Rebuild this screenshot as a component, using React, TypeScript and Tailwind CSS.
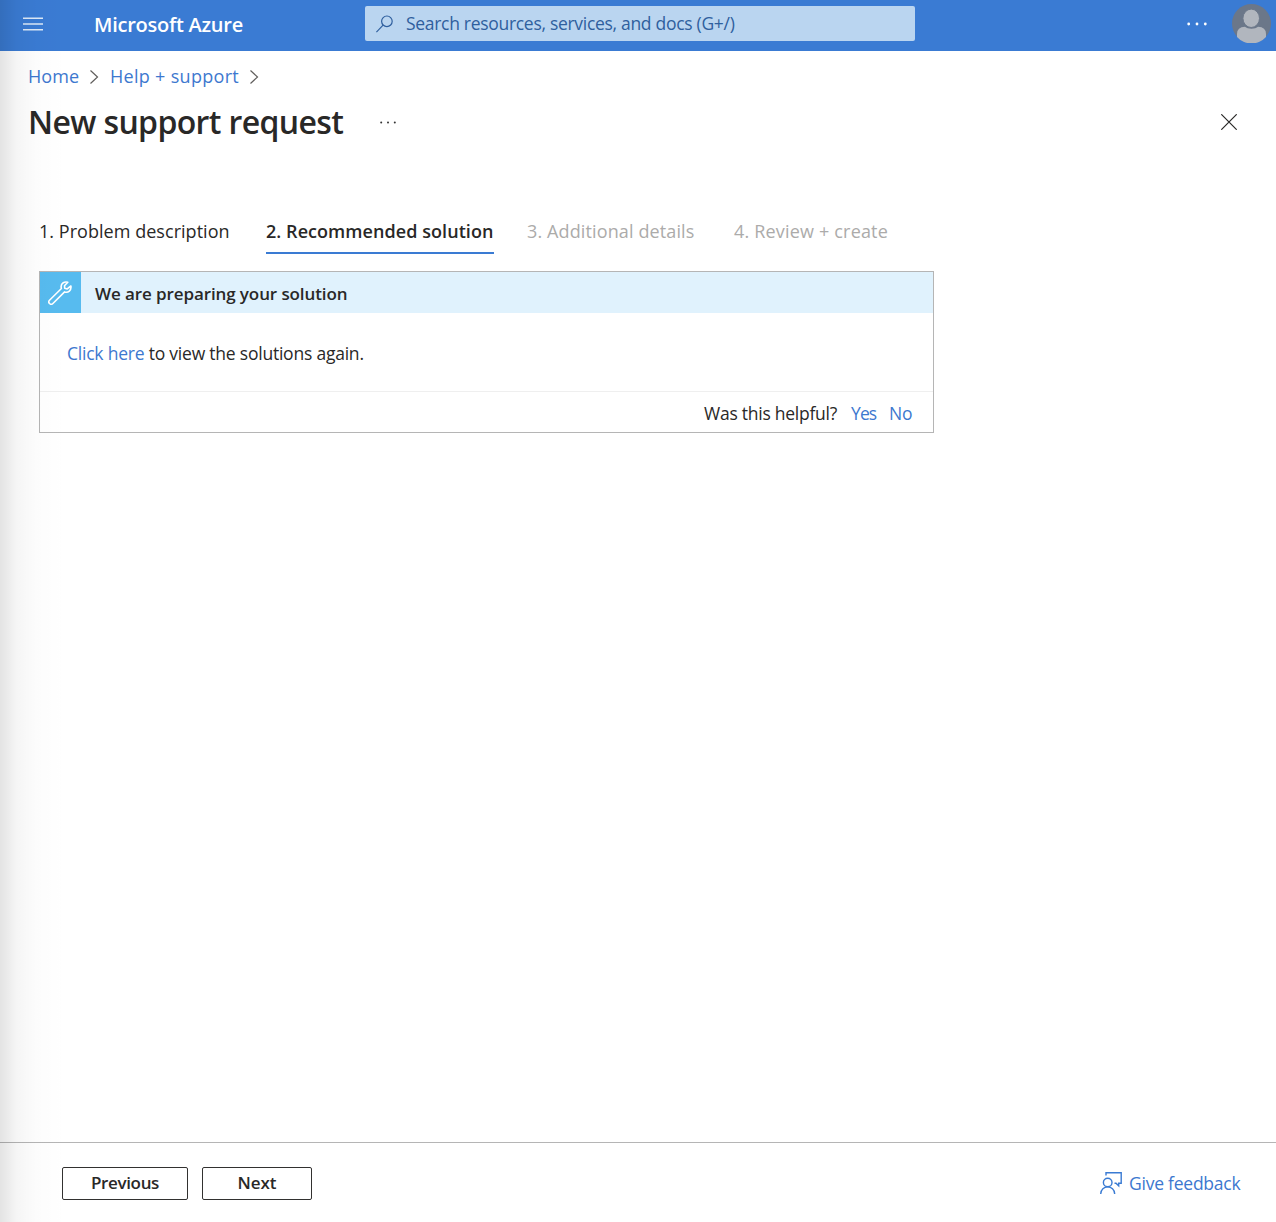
import React from "react";

function Chevron() {
  return (
    <svg className="h-[14px] w-[9px] shrink-0" viewBox="0 0 9 14" fill="none" stroke="#605e5c" strokeWidth="1.2">
      <path d="M.5.5 7.500 7 .5 13.500" />
    </svg>
  );
}

function Header() {
  return (
    <header className="flex h-[51px] shrink-0 items-start bg-[#3a7bd3] text-white">
      <svg className="mt-[17px] ml-[23px] h-[14px] w-5 shrink-0" viewBox="0 0 20 14" stroke="#dce9f8" strokeWidth="1.5">
        <path d="M0 1.300h20M0 7h20M0 12.700h20" />
      </svg>
      <div className="mt-[11px] ml-[51px] w-[271px] text-[20px] leading-[28px] font-semibold tracking-[-0.25px] whitespace-nowrap">
        Microsoft Azure
      </div>
      <div className="mt-[6px] flex h-[35px] w-[550px] items-center rounded-[2px] bg-[#bad5f0] text-[#2f5f9e]">
        <svg className="ml-[11px] h-[18px] w-[18px]" viewBox="0 0 18 18" fill="none" stroke="currentColor" strokeWidth="1.2">
          <circle cx="10.9" cy="6.3" r="5.3" />
          <path d="m7.1 10.2-6.7 6.9" />
        </svg>
        <span className="ml-[12px] text-[17.5px] tracking-[-0.3px] whitespace-nowrap">
          Search resources, services, and docs (G+/)
        </span>
      </div>
      <svg className="mt-[22px] ml-[272px] h-[4px] w-[20px]" viewBox="0 0 20 4" fill="#fff">
        <circle cx="1.7" cy="2" r="1.4" />
        <circle cx="10" cy="2" r="1.4" />
        <circle cx="18.3" cy="2" r="1.4" />
      </svg>
      <svg className="mt-[4px] ml-[25px] h-[39px] w-[39px]" viewBox="0 0 39 39">
        <circle cx="19.5" cy="19.5" r="19.5" fill="#6b7789" />
        <path d="M5 33v-3q0-7 8-7.200c2.500 2.500 10.500 2.500 13 0q8 .2 8 7.200v3A19.500 19.500 0 0 1 5 33Z" fill="#b1b6be" />
        <ellipse cx="19.200" cy="14.300" rx="8.300" ry="9.200" fill="#b1b6be" stroke="#6b7789" strokeWidth="1" />
      </svg>
    </header>
  );
}

function WrenchIcon() {
  return (
    <svg className="-ml-[2px] h-6 w-6" viewBox="0 0 24 24" fill="none" stroke="#fff" strokeWidth="1.6" strokeLinejoin="round">
      <path d="M19.800 1.300c-3.300-1.200-6.700 1-6.700 4.300 0 .7.100 1.300.300 1.900L1.500 19.200a2.300 2.300 0 0 0 3.400 3.300L16.600 10.900c3.500 1.200 7-1.500 6.300-5.900l-3.700 2.900-2.500-.7-.2-2.500Z" />
    </svg>
  );
}

export default function App() {
  return (
    <div className="relative flex h-[1222px] w-[1276px] flex-col overflow-hidden bg-white font-['Open_Sans','Noto_Sans',sans-serif] text-[#292827]">
      <Header />
      <main className="flex grow flex-col">
        <nav className="mt-[12px] ml-[28px] flex h-[27px] items-center text-[18px] whitespace-nowrap text-[#3d78cf]">
          <a className="w-[62px] tracking-[0.1px]">Home</a>
          <Chevron />
          <a className="ml-[11px] w-[140px] tracking-[0.3px]">Help + support</a>
          <Chevron />
        </nav>
        <div className="mt-[9px] ml-[28px] flex h-[46px] items-center">
          <h1 className="w-[352px] text-[32px] leading-[46px] font-semibold tracking-[-0.62px] whitespace-nowrap">New support request</h1>
          <svg className="h-[3px] w-[16px]" viewBox="0 0 16 3" fill="#333">
            <circle cx="1.200" cy="1.500" r="1" />
            <circle cx="8" cy="1.500" r="1" />
            <circle cx="14.800" cy="1.500" r="1" />
          </svg>
          <svg className="ml-[825px] h-[16px] w-[16px]" viewBox="0 0 16 16" stroke="#292827" strokeWidth="1.200">
            <path d="m.3.3 15.400 15.400M15.700.3.3 15.700" />
          </svg>
        </div>
        <div className="mt-[72px] ml-[39px] flex h-[37px] text-[18px] leading-[29px] whitespace-nowrap">
          <div className="w-[227px] tracking-[0.040px]">1. Problem description</div>
          <div className="h-[37px] w-[228px] border-b-2 border-[#3a7bd3] font-semibold tracking-[0.060px]">2. Recommended solution</div>
          <div className="ml-[33px] w-[207px] tracking-[0.120px] text-[#acabaa]">3. Additional details</div>
          <div className="tracking-[0.180px] text-[#acabaa]">4. Review + create</div>
        </div>
        <section className="mt-[17px] ml-[39px] flex h-[162px] w-[895px] flex-col border border-[#b5b5b5] bg-white/60 whitespace-nowrap">
          <div className="flex h-[41px] items-center bg-[#e0f2fd]">
            <div className="flex h-[41px] w-[41px] items-center justify-center bg-[#57bbef]">
              <WrenchIcon />
            </div>
            <h2 className="mt-[2px] ml-[14px] text-[17px] font-semibold tracking-[-0.100px]">We are preparing your solution</h2>
          </div>
          <p className="flex h-[78px] items-center pt-[3px] pl-[27px] text-[17.500px] tracking-[-0.220px]">
            <span><a className="text-[#3d78cf]">Click here</a> to view the solutions again.</span>
          </p>
          <div className="flex grow items-center border-t border-[#efefef] pt-[3px] pl-[664px] text-[17.500px]">
            <span className="w-[147px] tracking-[-0.250px]">Was this helpful?</span>
            <a className="w-[38px] tracking-[-0.900px] text-[#3d78cf]">Yes</a>
            <a className="tracking-[-0.200px] text-[#3d78cf]">No</a>
          </div>
        </section>
      </main>
      <footer className="flex h-[80px] shrink-0 items-start border-t border-[#b5b5b5] pl-[62px] text-[17px]">
        <button className="mt-[24px] flex h-[33px] w-[126px] justify-center rounded-[2px] border border-[#323130] bg-white leading-[29px] font-semibold tracking-[-0.350px]">Previous</button>
        <button className="mt-[24px] ml-[14px] flex h-[33px] w-[110px] justify-center rounded-[2px] border border-[#323130] bg-white leading-[29px] font-semibold tracking-[-0.100px]">Next</button>
        <a className="mt-[28px] ml-[788px] flex h-[25px] items-center whitespace-nowrap text-[#3d78cf]">
          <svg className="-mt-[2px] h-[22px] w-[22px]" viewBox="0 0 22 22" fill="none" stroke="#3a7bd3" strokeWidth="1.400">
            <path d="M6 3.500V.8h15.200v10.400h-2.500v2.600l-2.700-2.600h-1.500M.7 22c0-9.500 14-9.500 14 0" />
            <circle cx="7.700" cy="10.500" r="4.300" />
          </svg>
          <span className="ml-[7px] text-[17.500px] tracking-[-0.240px]">Give feedback</span>
        </a>
      </footer>
      <div className="pointer-events-none absolute inset-y-0 left-0 w-[66px] bg-[linear-gradient(to_right,rgba(0,0,0,0.11),rgba(0,0,0,0.04)_25%,rgba(0,0,0,0.013)_55%,transparent)]" />
    </div>
  );
}
